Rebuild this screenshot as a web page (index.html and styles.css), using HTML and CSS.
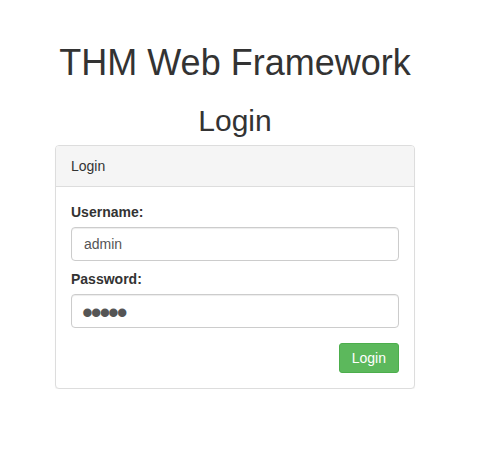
FILE: index.html
```html
<!DOCTYPE html>
<html lang="en">
<head>
<meta charset="utf-8">
<title>THM Web Framework - Login</title>
<link rel="stylesheet" href="styles.css">
</head>
<body>
<div class="page">
  <h1 class="site-title">THM Web Framework</h1>
  <h2 class="page-title">Login</h2>
  <div class="panel">
    <div class="panel-heading">Login</div>
    <div class="panel-body">
      <form class="login-form" onsubmit="return false;">
        <div class="form-group">
          <label class="form-label" for="username">Username:</label>
          <input class="form-control" id="username" type="text" value="admin">
        </div>
        <div class="form-group">
          <label class="form-label" for="password">Password:</label>
          <input class="form-control form-control-secret" id="password" type="password" value="admin">
        </div>
        <div class="form-actions">
          <button class="btn-success" type="submit">Login</button>
        </div>
      </form>
    </div>
  </div>
</div>
</body>
</html>
```

FILE: styles.css
```css
html, body {
  margin: 0;
  padding: 0;
  background: #fff;
}
body {
  font-family: "Liberation Sans", Arial, Helvetica, sans-serif;
  font-size: 14px;
  line-height: 20px;
  color: #333;
}
.page {
  width: 470px;
  display: flex;
  flex-direction: column;
  align-items: center;
}
.site-title {
  font-size: 36px;
  font-weight: 500;
  line-height: 40px;
  margin: 43px 0 21px;
  color: #333;
}
.page-title {
  font-size: 30px;
  font-weight: 500;
  line-height: 33px;
  margin: 0 0 8px;
  color: #333;
}
.panel {
  width: 360px;
  box-sizing: border-box;
  border: 1px solid #ddd;
  border-radius: 4px;
  background: #fff;
  box-shadow: 0 1px 1px rgba(0, 0, 0, 0.05);
}
.panel-heading {
  padding: 10px 15px;
  background: #f5f5f5;
  border-bottom: 1px solid #ddd;
  border-radius: 3px 3px 0 0;
}
.panel-body {
  padding: 15px;
}
.login-form {
  display: flex;
  flex-direction: column;
  gap: 8px;
}
.form-group {
  display: flex;
  flex-direction: column;
}
.form-label {
  font-weight: bold;
  margin-bottom: 5px;
}
.form-control {
  box-sizing: border-box;
  width: 100%;
  height: 34px;
  padding: 6px 12px;
  font-family: inherit;
  font-size: 14px;
  line-height: 20px;
  color: #555;
  background: #fff;
  border: 1px solid #ccc;
  border-radius: 4px;
  box-shadow: inset 0 1px 1px rgba(0, 0, 0, 0.075);
  margin: 0;
}
.form-control-secret {
  font-size: 31px;
  letter-spacing: -2.15px;
  padding: 8px 12px 4px 10px;
}
.form-actions {
  display: flex;
  justify-content: flex-end;
  margin-top: 7px;
}
.btn-success {
  font-family: inherit;
  font-size: 14px;
  line-height: 20px;
  padding: 4px 12px;
  color: #fff;
  background: #5cb85c;
  border: 1px solid #4cae4c;
  border-radius: 3px;
  cursor: pointer;
  margin: 0;
}
```
